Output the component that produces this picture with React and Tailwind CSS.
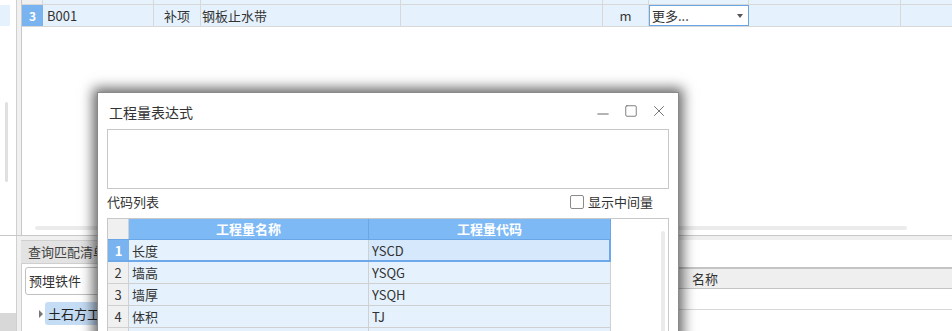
import { Minus, Square, X } from "lucide-react";

const font = { fontFamily: '"Noto Sans CJK SC", "Liberation Sans", sans-serif' };

const codeRows = [
  { n: 1, name: "长度", code: "YSCD" },
  { n: 2, name: "墙高", code: "YSQG" },
  { n: 3, name: "墙厚", code: "YSQH" },
  { n: 4, name: "体积", code: "TJ" },
  { n: "", name: "", code: "" },
];

const TopGrid = () => (
  <div className="flex-1 flex flex-col border-l border-[#c8c8c8] min-w-0">
    {/* header remnant */}
    <div className="flex h-[5px] bg-[#e6f2fc] border-b border-[#d8d8d8]">
      <div className="w-[21px] bg-[#f0f0f0] border-r border-[#d8d8d8]" />
      <div className="w-[111px] border-r border-[#d8d8d8]" />
      <div className="w-[47px] border-r border-[#d8d8d8]" />
      <div className="w-[200px] border-r border-[#d8d8d8]" />
      <div className="w-[202px] border-r border-[#d8d8d8]" />
      <div className="w-[46px] border-r border-[#d8d8d8]" />
      <div className="w-[100px] border-r border-[#d8d8d8]" />
      <div className="w-[152px] border-r border-[#d8d8d8]" />
      <div className="flex-1" />
    </div>
    {/* row 3 */}
    <div className="flex h-[22px] bg-[#e5f2fd] border-b border-[#d8d8d8] text-[13px] text-[#333] leading-[21px]">
      <div className="w-[21px] bg-[#7ab4f0] text-white font-bold text-[12px] text-center">3</div>
      <div className="w-[111px] border-r border-[#d8d8d8] pl-[4px]">B001</div>
      <div className="w-[47px] border-r border-[#d8d8d8] text-center">补项</div>
      <div className="w-[200px] border-r border-[#d8d8d8] pl-[1px]">钢板止水带</div>
      <div className="w-[202px] border-r border-[#d8d8d8]" />
      <div className="w-[46px] border-r border-[#d8d8d8] text-center">m</div>
      <div className="w-[100px] border border-[#6aa6e6] bg-white flex items-center justify-between pl-[2px] pr-[5px]">
        <span>更多...</span>
        <span className="w-0 h-0 border-l-[3px] border-r-[3px] border-t-[4px] border-l-transparent border-r-transparent border-t-[#555]" />
      </div>
      <div className="w-[152px] border-r border-[#d8d8d8]" />
      <div className="flex-1" />
    </div>
    <div className="flex-1 bg-white flex flex-col justify-end pb-[5px]">
      <div className="ml-[13px] w-[872px] h-[4px] rounded-full bg-[#ebebeb]" />
    </div>
  </div>
);

const CodeDialog = () => (
  <div className="absolute left-[97px] top-[92px] w-[582px] h-[260px] bg-white border border-[#8a8a8a] shadow-[0_0_12px_4px_rgba(0,0,0,0.6)] flex flex-col px-[9px]">
    {/* title bar */}
    <div className="h-[36px] flex items-center justify-between">
      <span className="text-[14px] text-[#333] pl-[2px] pt-[2px]">工程量表达式</span>
      <div className="flex items-center gap-[10px] text-[#666] pr-[1px]">
        <Minus size={18} strokeWidth={1.3} className="mt-[5px]" />
        <Square size={14} strokeWidth={1.4} className="mx-[2px]" />
        <X size={18} strokeWidth={1.2} />
      </div>
    </div>
    {/* expression box */}
    <div className="h-[60px] border border-[#c8c8c8]" />
    <div className="h-[29px] flex items-center justify-between pb-[3px]">
      <span className="text-[13px] text-[#333]">代码列表</span>
      <label className="flex items-center gap-[4px] text-[13px] text-[#333] pr-[16px]">
        <span className="w-[14px] h-[14px] border border-[#8a8a8a] rounded-[2px] bg-white" />
        显示中间量
      </label>
    </div>
    {/* code grid */}
    <div className="flex-1 border border-[#c8c8c8] flex">
      <div className="w-[503px] flex flex-col text-[13px] text-[#333]">
        <div className="flex h-[21px] bg-[#7db9f5] text-white font-bold text-[13px] leading-[20px] border-b border-[#6aa6e6]">
          <div className="w-[21px] bg-[#f0f0f0] border-r border-[#d0d0d0]" />
          <div className="w-[240px] text-center border-r border-[#6aa6e6]">工程量名称</div>
          <div className="flex-1 text-center border-r border-[#6aa6e6]">工程量代码</div>
        </div>
        {codeRows.map((r, i) =>
          r.n === 1 ? (
            <div key={i} className="flex h-[22px] bg-[#d5e8fc] border-b-2 border-r-2 border-[#6ca8ea] leading-[21px]">
              <div className="w-[21px] bg-[#7ab4f0] text-white font-bold text-center">1</div>
              <div className="w-[240px] pl-[3px] border-r border-[#d0d0d0] bg-[#e5f2fd]">{r.name}</div>
              <div className="flex-1 pl-[3px]">{r.code}</div>
            </div>
          ) : (
            <div key={i} className="flex h-[22px] bg-[#e5f2fd] border-b border-r border-[#d0d0d0] leading-[21px]">
              <div className="w-[21px] bg-[#f0f0f0] border-r border-[#d0d0d0] text-center">{r.n}</div>
              <div className="w-[240px] pl-[3px] border-r border-[#d0d0d0]">{r.name}</div>
              <div className="flex-1 pl-[3px]">{r.code}</div>
            </div>
          )
        )}
      </div>
      <div className="flex-1 flex justify-end pr-[3px] pt-[12px]">
        <div className="w-[4px] h-full rounded-full bg-[#ebebeb]" />
      </div>
    </div>
  </div>
);

export default function App() {
  return (
    <div className="relative w-[952px] h-[331px] overflow-hidden bg-[#f0f0f0] flex flex-col" style={font}>
      {/* top area */}
      <div className="h-[236px] flex border-b border-[#c8c8c8]">
        <div className="w-[17px] bg-white border-r border-[#d0d0d0] flex flex-col">
          <div className="h-[5px]" />
          <div className="h-[21px] w-[10px] bg-[#e5f2fd]" />
          <div className="flex-1 flex pl-[5px] pt-[76px] pb-[50px]">
            <div className="w-[3px] h-[80px] rounded-full bg-[#e0e0e0]" />
          </div>
        </div>
        <div className="w-[4px] bg-[#f0f0f0]" />
        <TopGrid />
      </div>
      {/* bottom area */}
      <div className="flex-1 flex">
        <div className="w-[17px] bg-white border-r border-[#d0d0d0] flex flex-col justify-end">
          <div className="h-[18px] bg-[#d8d8d8]" />
        </div>
        <div className="w-[4px]" />
        <div className="w-[300px] flex flex-col pt-[4px]">
          <div className="h-[23px] w-[110px] bg-[#e3e3e3] border-t border-[#cfcfcf] text-[13px] text-[#444] pl-[7px] leading-[22px]">查询匹配清单</div>
          <div className="flex-1 bg-white border-l border-t border-[#cfcfcf] pt-[3px] pl-[3px]">
            <div className="h-[28px] border border-[#c0c0c0] rounded-[3px] text-[13px] text-[#333] pl-[3px] leading-[26px]">预埋铁件</div>
            <div className="flex items-center mt-[7px] ml-[14px]">
              <span className="w-0 h-0 border-t-[4px] border-b-[4px] border-l-[4px] border-t-transparent border-b-transparent border-l-[#777]" />
              <span className="ml-[2px] px-[3px] h-[23px] bg-[#c5dcf5] rounded-[3px] text-[13px] text-[#222] leading-[23px]">土石方工程</span>
            </div>
          </div>
        </div>
        <div className="flex-1 flex flex-col">
          <div className="h-[4px] bg-[#efefef]" />
          <div className="flex-1 bg-white flex flex-col pt-[27px]">
            <div className="h-[22px] bg-[#efefef] border-t-2 border-b border-[#c4c4c4] text-[13px] text-[#333] leading-[19px] pl-[371px]">名称</div>
            <div className="h-[21px] border-b border-[#d8d8d8]" />
          </div>
        </div>
      </div>
      <CodeDialog />
    </div>
  );
}
